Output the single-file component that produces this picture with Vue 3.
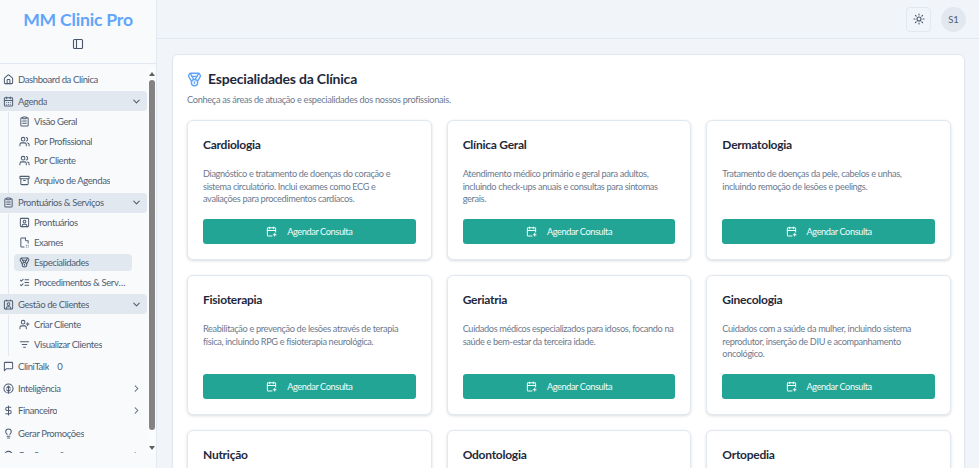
<template>
  <div class="app">
    <aside class="sidebar">
      <div class="brand">
        <h1>MM Clinic Pro</h1>
        <button class="collapse" aria-label="Recolher menu">
          <svg viewBox="0 0 24 24"><rect x="3" y="3" width="18" height="18" rx="2" /><path d="M9 3v18" /></svg>
        </button>
      </div>
      <div class="nav-wrap">
        <nav class="nav">
          <template v-for="item in menu" :key="item.label">
            <div class="nav-item" :class="{ open: item.children }">
              <svg class="ico" viewBox="0 0 24 24"><path v-for="d in icons[item.icon]" :key="d" :d="d" /></svg>
              <span class="label">{{ item.label }}</span>
              <span v-if="item.badge" class="badge">{{ item.badge }}</span>
              <svg v-if="item.children" class="chev" viewBox="0 0 24 24"><path d="m6 9 6 6 6-6" /></svg>
              <svg v-else-if="item.more" class="chev" viewBox="0 0 24 24"><path d="m9 18 6-6-6-6" /></svg>
            </div>
            <div v-if="item.children" class="subs">
              <div v-for="sub in item.children" :key="sub.label" class="sub-item" :class="{ active: sub.active }">
                <svg class="ico" viewBox="0 0 24 24"><path v-for="d in icons[sub.icon]" :key="d" :d="d" /></svg>
                <span class="label">{{ sub.label }}</span>
              </div>
            </div>
          </template>
        </nav>
        <div class="scrollbar">
          <i class="arrow up"></i>
          <i class="thumb"></i>
          <i class="arrow down"></i>
        </div>
      </div>
    </aside>

    <div class="main">
      <header class="topbar">
        <button class="theme" aria-label="Tema">
          <svg viewBox="0 0 24 24"><circle cx="12" cy="12" r="4" /><path d="M12 2v2M12 20v2M4.9 4.9l1.4 1.4M17.7 17.7l1.4 1.4M2 12h2M20 12h2M6.3 17.7l-1.4 1.4M19.1 4.9l-1.4 1.4" /></svg>
        </button>
        <div class="avatar">S1</div>
      </header>
      <main class="content">
        <section class="panel">
          <h2>
            <svg viewBox="0 0 24 24"><path v-for="d in icons.medal" :key="d" :d="d" /></svg>
            Especialidades da Clínica
          </h2>
          <p class="lead">Conheça as áreas de atuação e especialidades dos nossos profissionais.</p>
          <div class="grid">
            <article v-for="card in cards" :key="card.title" class="card">
              <h3>{{ card.title }}</h3>
              <p>{{ card.text }}</p>
              <button class="book">
                <svg viewBox="0 0 24 24"><path d="M21 13V6a2 2 0 0 0-2-2H5a2 2 0 0 0-2 2v14a2 2 0 0 0 2 2h8" /><path d="M16 2v4M8 2v4M3 10h18M16 19h6M19 16v6" /></svg>
                Agendar Consulta
              </button>
            </article>
          </div>
        </section>
      </main>
    </div>
  </div>
</template>

<script setup>
const icons = {
  home: ['M15 21v-8a1 1 0 0 0-1-1h-4a1 1 0 0 0-1 1v8', 'M3 10a2 2 0 0 1 .7-1.5l7-6a2 2 0 0 1 2.6 0l7 6a2 2 0 0 1 .7 1.5v9a2 2 0 0 1-2 2H5a2 2 0 0 1-2-2z'],
  calendar: ['M8 2v4M16 2v4', 'M5 4h14a2 2 0 0 1 2 2v14a2 2 0 0 1-2 2H5a2 2 0 0 1-2-2V6a2 2 0 0 1 2-2z', 'M3 10h18M8 14h.01M12 14h.01M16 14h.01M8 18h.01M12 18h.01M16 18h.01'],
  clipboard: ['M9 2h6a1 1 0 0 1 1 1v2a1 1 0 0 1-1 1H9a1 1 0 0 1-1-1V3a1 1 0 0 1 1-1z', 'M16 4h2a2 2 0 0 1 2 2v14a2 2 0 0 1-2 2H6a2 2 0 0 1-2-2V6a2 2 0 0 1 2-2h2', 'M8 11h8M8 16h8'],
  users: ['M16 21v-2a4 4 0 0 0-4-4H6a4 4 0 0 0-4 4v2', 'M9 3a4 4 0 1 1 0 8 4 4 0 0 1 0-8z', 'M22 21v-2a4 4 0 0 0-3-3.87', 'M16 3.13a4 4 0 0 1 0 7.75'],
  archive: ['M3 3h18a1 1 0 0 1 1 1v3a1 1 0 0 1-1 1H3a1 1 0 0 1-1-1V4a1 1 0 0 1 1-1z', 'M4 8v11a2 2 0 0 0 2 2h12a2 2 0 0 0 2-2V8', 'M10 12h4'],
  record: ['M5 3h14a2 2 0 0 1 2 2v14a2 2 0 0 1-2 2H5a2 2 0 0 1-2-2V5a2 2 0 0 1 2-2z', 'M12 7a3 3 0 1 1 0 6 3 3 0 0 1 0-6z', 'M7 21v-2a3 3 0 0 1 3-3h4a3 3 0 0 1 3 3v2'],
  exam: ['M14 2H6a2 2 0 0 0-2 2v16a2 2 0 0 0 2 2h5', 'M14 2v4a2 2 0 0 0 2 2h4v5', 'M16 18h.01M20 18h.01M16 22h.01M20 22h.01'],
  medal: ['M7.21 15 2.66 7.14a2 2 0 0 1 .13-2.2L4.4 2.8A2 2 0 0 1 6 2h12a2 2 0 0 1 1.6.8l1.6 2.14a2 2 0 0 1 .14 2.2L16.79 15', 'M11 12 5.12 2.2', 'm13 12 5.88-9.8', 'M8 7h8', 'M12 12a5 5 0 1 1 0 10 5 5 0 0 1 0-10z', 'M12 18v-2h-.5'],
  list: ['m3 17 2 2 4-4', 'm3 7 2 2 4-4', 'M13 6h8M13 12h8M13 18h8'],
  contact: ['M16 2v2M8 2v2', 'M5 4h14a2 2 0 0 1 2 2v14a2 2 0 0 1-2 2H5a2 2 0 0 1-2-2V6a2 2 0 0 1 2-2z', 'M12 8a3 3 0 1 1 0 6 3 3 0 0 1 0-6z', 'M7 22v-2a3 3 0 0 1 3-3h4a3 3 0 0 1 3 3v2'],
  userPlus: ['M16 21v-2a4 4 0 0 0-4-4H6a4 4 0 0 0-4 4v2', 'M9 3a4 4 0 1 1 0 8 4 4 0 0 1 0-8z', 'M19 8v6M22 11h-6'],
  filter: ['M3 6h18M7 12h10M10 18h4'],
  chat: ['M21 15a2 2 0 0 1-2 2H7l-4 4V5a2 2 0 0 1 2-2h14a2 2 0 0 1 2 2z'],
  brain: ['M12 2a10 10 0 1 1 0 20 10 10 0 0 1 0-20z', 'M12 22V7', 'M12 7 8 11M12 7l4 4M8 15l4 3M16 15l-4 3'],
  dollar: ['M12 2v20', 'M17 5H9.5a3.5 3.5 0 0 0 0 7h5a3.5 3.5 0 0 1 0 7H6'],
  bulb: ['M15 14c.2-1 .7-1.7 1.5-2.5 1-.9 1.5-2.2 1.5-3.5A6 6 0 0 0 6 8c0 1 .2 2.2 1.5 3.5.7.7 1.3 1.5 1.5 2.5', 'M9 18h6M10 22h4'],
  gear: ['M12 3a9 9 0 1 1 0 18 9 9 0 0 1 0-18z', 'M12 9a3 3 0 1 1 0 6 3 3 0 0 1 0-6z']
}

const menu = [
  { label: 'Dashboard da Clínica', icon: 'home' },
  {
    label: 'Agenda',
    icon: 'calendar',
    children: [
      { label: 'Visão Geral', icon: 'clipboard' },
      { label: 'Por Profissional', icon: 'users' },
      { label: 'Por Cliente', icon: 'users' },
      { label: 'Arquivo de Agendas', icon: 'archive' }
    ]
  },
  {
    label: 'Prontuários & Serviços',
    icon: 'clipboard',
    children: [
      { label: 'Prontuários', icon: 'record' },
      { label: 'Exames', icon: 'exam' },
      { label: 'Especialidades', icon: 'medal', active: true },
      { label: 'Procedimentos & Serviços', icon: 'list' }
    ]
  },
  {
    label: 'Gestão de Clientes',
    icon: 'contact',
    children: [
      { label: 'Criar Cliente', icon: 'userPlus' },
      { label: 'Visualizar Clientes', icon: 'filter' }
    ]
  },
  { label: 'CliniTalk', icon: 'chat', badge: '0' },
  { label: 'Inteligência', icon: 'brain', more: true },
  { label: 'Financeiro', icon: 'dollar', more: true },
  { label: 'Gerar Promoções', icon: 'bulb' },
  { label: 'Configurações', icon: 'gear', more: true }
]

const cards = [
  { title: 'Cardiologia', text: 'Diagnóstico e tratamento de doenças do coração e sistema circulatório. Inclui exames como ECG e avaliações para procedimentos cardíacos.' },
  { title: 'Clínica Geral', text: 'Atendimento médico primário e geral para adultos, incluindo check-ups anuais e consultas para sintomas gerais.' },
  { title: 'Dermatologia', text: 'Tratamento de doenças da pele, cabelos e unhas, incluindo remoção de lesões e peelings.' },
  { title: 'Fisioterapia', text: 'Reabilitação e prevenção de lesões através de terapia física, incluindo RPG e fisioterapia neurológica.' },
  { title: 'Geriatria', text: 'Cuidados médicos especializados para idosos, focando na saúde e bem-estar da terceira idade.' },
  { title: 'Ginecologia', text: 'Cuidados com a saúde da mulher, incluindo sistema reprodutor, inserção de DIU e acompanhamento oncológico.' },
  { title: 'Nutrição', text: 'Planos alimentares personalizados e acompanhamento nutricional para todas as idades.' },
  { title: 'Odontologia', text: 'Cuidados com a saúde bucal, incluindo limpeza, restaurações e tratamentos de canal.' },
  { title: 'Ortopedia', text: 'Tratamento de lesões e doenças dos ossos, articulações, músculos e ligamentos.' }
]
</script>

<style>
html, body { margin: 0; height: 100%; overflow: hidden; }
</style>

<style scoped>
.app {
  display: flex;
  height: 468px;
  overflow: hidden;
  background: #f1f5f9;
  font-family: Lato, "Noto Sans", sans-serif;
  color: #4f5d72;
}
button {
  font-family: inherit;
  cursor: pointer;
}
svg {
  fill: none;
  stroke: currentColor;
  stroke-width: 2.2;
  stroke-linecap: round;
  stroke-linejoin: round;
}

/* sidebar */
.sidebar {
  width: 157px;
  flex: none;
  display: flex;
  flex-direction: column;
  padding-bottom: 15px;
  box-sizing: border-box;
  background: #f8fafc;
  border-right: 1px solid #e2e8f0;
}
.brand {
  height: 64px;
  flex: none;
  box-sizing: border-box;
  border-bottom: 1px solid #e2e8f0;
  display: flex;
  flex-direction: column;
  align-items: center;
  padding-top: 8px;
}
.brand h1 {
  margin: 0;
  font-size: 17.6px;
  letter-spacing: -.2px;
  line-height: 24px;
  font-weight: 700;
  color: #60a5fa;
}
.collapse {
  margin-top: 6px;
  padding: 0;
  width: 12px;
  height: 12px;
  border: 0;
  background: none;
  color: #475569;
  display: flex;
}
.collapse svg { width: 12px; height: 12px; }
.nav-wrap {
  flex: 1;
  min-height: 0;
  position: relative;
  padding-top: 5px;
  display: flex;
}
.nav {
  flex: 1;
  min-width: 0;
  overflow: hidden;
  padding-right: 9px;
}
.scrollbar {
  position: absolute;
  top: 4px;
  bottom: 0;
  right: 0;
  width: 8px;
  display: flex;
  flex-direction: column;
  align-items: center;
  background: #fbfcfd;
}
.scrollbar .thumb {
  display: block;
  width: 6px;
  margin: 4px 0 16px;
  flex: 1;
  background: #838383;
  border-radius: 3px;
}
.scrollbar .arrow {
  display: block;
  flex: none;
  width: 0;
  height: 0;
  border-left: 3px solid transparent;
  border-right: 3px solid transparent;
}
.scrollbar .up {
  margin-top: 4px;
  border-bottom: 4px solid #606060;
}
.scrollbar .down {
  margin-bottom: 3px;
  border-top: 4px solid #606060;
}
.nav-item {
  height: 20px;
  margin-bottom: 2.4px;
  padding: 0 5px 0 3px;
  display: flex;
  align-items: center;
  gap: 4px;
  font-size: 9.5px;
  letter-spacing: -.4px;
  white-space: nowrap;
  border-radius: 0 4px 4px 0;
}
.nav-item.open {
  background: #e2e8f0;
  margin-bottom: 1.1px;
}
.ico {
  width: 11px;
  height: 11px;
  flex: none;
}
.label {
  overflow: hidden;
  text-overflow: ellipsis;
}
.badge {
  margin-left: 4px;
  letter-spacing: 0;
}
.chev {
  width: 11px;
  height: 11px;
  margin-left: auto;
  flex: none;
}
.subs {
  margin-left: 8px;
  padding: 0 0 1.2px 5px;
  border-left: 1px solid #e2e8f0;
  width: 118px;
}
.sub-item {
  height: 17.8px;
  margin-bottom: 2px;
  padding: 0 6px 0 4.5px;
  display: flex;
  align-items: center;
  gap: 4.5px;
  font-size: 9.5px;
  letter-spacing: -.4px;
  white-space: nowrap;
  border-radius: 4px;
}
.sub-item.active { background: #e2e8f0; }

/* main */
.main {
  flex: 1;
  min-width: 0;
  display: flex;
  flex-direction: column;
}
.topbar {
  height: 39px;
  flex: none;
  box-sizing: border-box;
  border-bottom: 1px solid #e2e8f0;
  display: flex;
  justify-content: flex-end;
  align-items: center;
  gap: 10px;
  padding: 0 13px 0 0;
}
.theme {
  width: 25px;
  height: 25px;
  padding: 0;
  border: 1px solid #e2e8f0;
  border-radius: 4px;
  background: #f1f5f9;
  color: #475569;
  display: flex;
  align-items: center;
  justify-content: center;
}
.theme svg { width: 12px; height: 12px; }
.avatar {
  width: 25px;
  height: 25px;
  border-radius: 50%;
  background: #e2e8f0;
  display: flex;
  align-items: center;
  justify-content: center;
  font-size: 9.5px;
}
.content {
  flex: 1;
  min-height: 0;
  overflow: hidden;
  padding: 15px 14px 0 15px;
}
.panel {
  background: #fff;
  border: 1px solid #e2e8f0;
  border-radius: 6px;
  padding: 14px 13px 0 14px;
  box-shadow: 0 1px 2px rgba(15, 23, 42, .05);
}
.panel h2 {
  margin: 0;
  display: flex;
  align-items: center;
  gap: 6px;
  font-size: 14px;
  letter-spacing: -.2px;
  line-height: 20px;
  font-weight: 700;
  color: #1e293b;
}
.panel h2 svg {
  width: 15px;
  height: 15px;
  color: #60a5fa;
}
.lead {
  margin: 4px 0 0;
  font-size: 9.2px;
  letter-spacing: -.3px;
  line-height: 14px;
  color: #6b7a8f;
}
.grid {
  margin-top: 13px;
  display: grid;
  grid-template-columns: repeat(3, 1fr);
  gap: 15px;
}
.card {
  height: 140px;
  box-sizing: border-box;
  display: flex;
  flex-direction: column;
  background: #fff;
  border: 1px solid #e2e8f0;
  border-radius: 6px;
  padding: 15px;
  box-shadow: 0 1px 3px rgba(15, 23, 42, .15);
}
.card h3 {
  margin: 0;
  font-size: 12px;
  letter-spacing: -.25px;
  line-height: 18px;
  font-weight: 700;
  color: #1e293b;
}
.card p {
  margin: 14px 0 0;
  padding-right: 1.5px;
  flex: 1;
  font-size: 9.2px;
  letter-spacing: -.35px;
  line-height: 12.6px;
  color: #6b7a8f;
}
.book {
  height: 25px;
  flex: none;
  border: 0;
  border-radius: 3px;
  background: #23a596;
  color: #f0fdfa;
  font-size: 9.2px;
  letter-spacing: -.4px;
  display: flex;
  align-items: center;
  justify-content: center;
  gap: 10px;
}
.book svg { width: 11px; height: 11px; }
</style>
